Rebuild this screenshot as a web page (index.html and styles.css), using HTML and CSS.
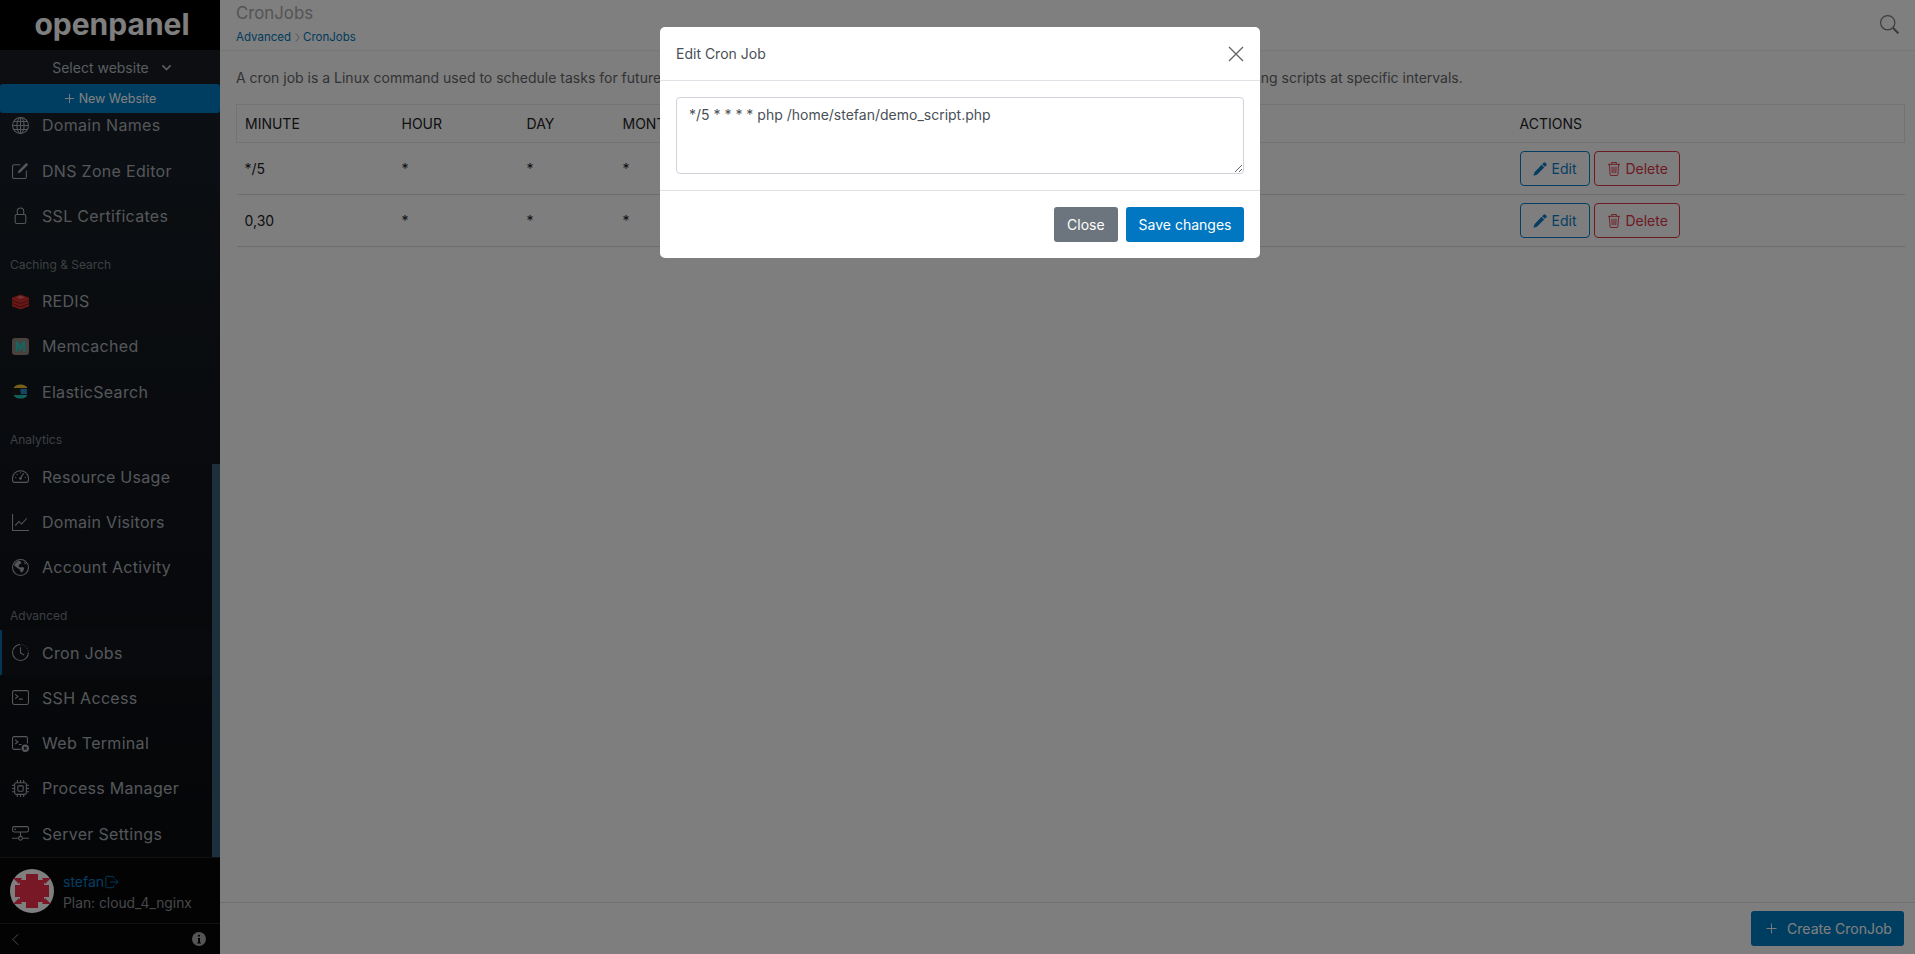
FILE: index.html
```html
<!DOCTYPE html>
<html lang="en">
<head>
<meta charset="utf-8">
<title>CronJobs</title>
<link rel="stylesheet" href="styles.css">
</head>
<body>
<div class="app">
  <aside class="sidebar">
    <div class="logo">openpanel</div>
    <div class="site-select">
      <span>Select website</span>
      <svg class="caret" viewBox="0 0 16 16"><path d="M2 5l6 6 6-6" fill="none" stroke="currentColor" stroke-width="2.500"/></svg>
    </div>
    <div class="new-site"><svg class="plus" viewBox="0 0 12 12"><path d="M6 1v10M1 6h10" stroke="currentColor"/></svg>New Website</div>
    <nav class="nav">
      <div class="nav-inner">
        <a class="item"><svg class="ico" viewBox="0 0 16 16"><g fill="none" stroke="currentColor"><circle cx="8" cy="8" r="7.500"/><ellipse cx="8" cy="8" rx="3.400" ry="7.500"/><path d="M8 .5v15M.5 8h15M1.600 4.300h12.800M1.600 11.700h12.800"/></g></svg>Domain Names</a>
        <a class="item"><svg class="ico" viewBox="0 0 16 16"><path d="M13.500.8l1.700 1.700-7.400 7.400-2.400.7.700-2.400z" fill="currentColor"/><path d="M8 2.500H2A1.500 1.500 0 0 0 .5 4v10A1.500 1.500 0 0 0 2 15.500h10a1.500 1.500 0 0 0 1.500-1.500V8" fill="none" stroke="currentColor"/></svg>DNS Zone Editor</a>
        <a class="item"><svg class="ico" viewBox="0 0 16 16"><path d="M5 7V4a3 3 0 0 1 6 0v3" fill="none" stroke="currentColor"/><rect x="3" y="7" width="10" height="8.500" rx="1.500" fill="none" stroke="currentColor"/></svg>SSL Certificates</a>
        <div class="label">Caching &amp; Search</div>
        <a class="item"><svg class="ico" viewBox="0 0 16 16"><path d="M8 1.500l8 3v8l-8 3-8-3v-8z" fill="#d0302c"/><path d="M0 7l8 3 8-3M0 10l8 3 8-3" fill="none" stroke="#7d1715" stroke-width=".9"/><path d="M8 2.500l4 1.500-4 1.500L4 4z" fill="#e9716c"/></svg>REDIS</a>
        <a class="item"><svg class="ico" viewBox="0 0 16 16"><rect width="16" height="16" rx="3" fill="#94857f"/><path d="M3.500 13V3h2.300L8 8l2.200-5h2.300v10h-2V7.500L8 12.500 5.500 7.500V13z" fill="#28c8bf"/></svg>Memcached</a>
        <a class="item"><svg class="ico" viewBox="0 0 16 16"><path d="M1.500 4.800a6.800 4.800 0 0 1 13 0z" fill="#f0c22e"/><rect x="1" y="5.500" width="7" height="2.200" fill="#1d1d1f"/><rect x="8" y="5.500" width="6" height="5" fill="#2a8fcb"/><rect x="1" y="8.300" width="7" height="2.200" fill="#1d1d1f"/><path d="M1.500 11.200h13a6.800 4.800 0 0 1-13 0z" fill="#22c1b3"/></svg>ElasticSearch</a>
        <div class="label">Analytics</div>
        <a class="item"><svg class="ico" viewBox="0 0 16 16"><g fill="none" stroke="currentColor"><path d="M2.800 13.500A2.300 2.300 0 0 1 .5 11.200V9.500a7.500 7 0 0 1 15 0v1.700a2.300 2.300 0 0 1-2.300 2.300z"/><path d="M8 9.500l3-4.500M3 9h1M12 9h1M8 4v1M4.500 5.800l.7.700"/></g><circle cx="8" cy="9.800" r="1.200" fill="currentColor"/></svg>Resource Usage</a>
        <a class="item"><svg class="ico" viewBox="0 0 16 16"><path d="M.5 0v15.500H16M3 11l3.500-4 2.500 2.500L14 4" fill="none" stroke="currentColor"/></svg>Domain Visitors</a>
        <a class="item"><svg class="ico" viewBox="0 0 16 16"><circle cx="8" cy="8" r="7.500" fill="none" stroke="currentColor"/><path d="M3 4l3-2.500 2 .5 1 2-2 1-1 2 2 1 2-.5 1.500 1-1 3-2 1.500-1-3-3-2-2.500-2zM11 2.500l2.500 2-1.500.5z" fill="currentColor"/></svg>Account Activity</a>
        <div class="label">Advanced</div>
        <a class="item active"><svg class="ico" viewBox="0 0 16 16"><g fill="none" stroke="currentColor"><path d="M8 .5a7.500 7.500 0 1 0 7.500 7.500"/><path d="M8 3v5.500l3.500 2"/><path d="M10 .8l.6.200M12.300 1.900l.5.400M14 3.700l.4.500M15 6l.2.600"/></g></svg>Cron Jobs</a>
        <a class="item"><svg class="ico" viewBox="0 0 16 16"><rect x=".5" y="1.500" width="15" height="13" rx="1.500" fill="none" stroke="currentColor"/><path d="M3 5l2.500 2L3 9M6.500 9.500h3.500" fill="none" stroke="currentColor"/></svg>SSH Access</a>
        <a class="item"><svg class="ico" viewBox="0 0 16 16"><path d="M8 13.500H2A1.500 1.500 0 0 1 .5 12V3A1.500 1.500 0 0 1 2 1.500h11A1.500 1.500 0 0 1 14.500 3v5" fill="none" stroke="currentColor"/><path d="M3 4.500l2.500 2L3 8.500M6.500 9H9" fill="none" stroke="currentColor"/><circle cx="12.500" cy="12.500" r="3.500" fill="currentColor"/><path d="M11.200 11.200l2.600 2.600m0-2.600l-2.600 2.600" stroke="#08090c"/></svg>Web Terminal</a>
        <a class="item"><svg class="ico" viewBox="0 0 16 16"><g fill="none" stroke="currentColor"><rect x="2.500" y="2.500" width="11" height="11" rx="1.500"/><rect x="5.500" y="5.500" width="5" height="5" rx=".8"/><path d="M5 0v2.500M8 0v2.500M11 0v2.500M5 13.500V16M8 13.500V16M11 13.500V16M0 5h2.500M0 8h2.500M0 11h2.500M13.500 5H16M13.500 8H16M13.500 11H16"/></g></svg>Process Manager</a>
        <a class="item"><svg class="ico" viewBox="0 0 16 16"><g fill="none" stroke="currentColor"><rect x=".5" y="1.500" width="15" height="5" rx="1.500"/><path d="M8 6.500v4M0 12.500h6M10 12.500h6"/><circle cx="8" cy="12.500" r="1.800"/></g><circle cx="3" cy="4" r=".8" fill="currentColor"/></svg>Server Settings</a>
      </div>
      <span class="scrollbar"></span>
    </nav>
    <div class="user">
      <svg class="avatar" viewBox="0 0 44 44"><circle cx="22" cy="22" r="22" fill="#fff"/><path d="M16 5h12v6h6v5h5v12h-5v5h-6v6H16v-6h-6v-5H5V16h5v-5h6z" fill="#f0304f"/><path d="M3 9l6 6 3-6zM41 9l-6 6-3-6zM3 35l6-6 3 6zM41 35l-6-6-3 6z" fill="#f0304f"/></svg>
      <div class="user-text">
        <div class="user-name">stefan<svg class="logout" viewBox="0 0 16 16"><path d="M10 4V2.500A1 1 0 0 0 9 1.500H2A1 1 0 0 0 1 2.500v11a1 1 0 0 0 1 1h7a1 1 0 0 0 1-1V12M6 8h9M12 5l3 3-3 3" fill="none" stroke="currentColor"/></svg></div>
        <div class="user-plan">Plan: cloud_4_nginx</div>
      </div>
    </div>
    <div class="side-foot">
      <svg class="collapse" viewBox="0 0 8 14"><path d="M7 1L1 7l6 6" fill="none" stroke="currentColor"/></svg>
      <svg class="info" viewBox="0 0 16 16"><circle cx="8" cy="8" r="8" fill="currentColor"/><path d="M6.800 6.800h2.300v5.200h1v1H6v-1h1V7.800h-.2zM8 3a1.200 1.200 0 1 1 0 2.500A1.200 1.200 0 0 1 8 3z" fill="#000"/></svg>
    </div>
  </aside>
  <main class="main">
    <header class="topbar">
      <div>
        <div class="page-title">CronJobs</div>
        <div class="crumbs"><a>Advanced</a><svg class="sep" viewBox="0 0 6 12"><path d="M1 1l4 5-4 5" fill="none" stroke="currentColor"/></svg><a>CronJobs</a></div>
      </div>
      <svg class="search" viewBox="0 0 16 16"><circle cx="6.500" cy="6.500" r="6" fill="none" stroke="currentColor"/><path d="M11 11l4.500 4.500" stroke="currentColor" stroke-width="1.800"/></svg>
    </header>
    <section class="content">
      <p class="desc">A cron job is a Linux command used to schedule tasks for future execution, commonly used for automating repetitive jobs, hourly system backups, or running scripts at specific intervals.</p>
      <table class="jobs">
        <colgroup><col class="c1"><col class="c2"><col class="c3"><col class="c4"><col class="c5"><col class="c6"><col class="c7"></colgroup>
        <thead><tr><th>MINUTE</th><th>HOUR</th><th>DAY</th><th>MONTH</th><th></th><th></th><th>ACTIONS</th></tr></thead>
        <tbody>
          <tr><td>*/5</td><td>*</td><td>*</td><td>*</td><td></td><td></td><td>
            <button class="btn edit"><svg class="bi" viewBox="0 0 16 16"><path d="M12.100.9a1.500 1.500 0 0 1 2.100 0l.9.900a1.500 1.500 0 0 1 0 2.100L13.500 5.500 10.500 2.500zM9.800 3.200l3 3-8.300 8.300-4 1.200 1.200-4z" fill="currentColor"/></svg>Edit</button>
            <button class="btn del"><svg class="bi" viewBox="1 1 14 15"><path d="M1.500 3.500h13M5.500 3.500V1.500h5v2M3 3.500l.8 11a1 1 0 0 0 1 1h6.400a1 1 0 0 0 1-1l.8-11M5.800 6l.3 7M8 6v7M10.200 6l-.3 7" fill="none" stroke="currentColor"/></svg>Delete</button>
          </td></tr>
          <tr><td>0,30</td><td>*</td><td>*</td><td>*</td><td></td><td></td><td>
            <button class="btn edit"><svg class="bi" viewBox="0 0 16 16"><path d="M12.100.9a1.500 1.500 0 0 1 2.100 0l.9.900a1.500 1.500 0 0 1 0 2.100L13.500 5.500 10.500 2.500zM9.800 3.200l3 3-8.300 8.300-4 1.200 1.200-4z" fill="currentColor"/></svg>Edit</button>
            <button class="btn del"><svg class="bi" viewBox="1 1 14 15"><path d="M1.500 3.500h13M5.500 3.500V1.500h5v2M3 3.500l.8 11a1 1 0 0 0 1 1h6.400a1 1 0 0 0 1-1l.8-11M5.800 6l.3 7M8 6v7M10.200 6l-.3 7" fill="none" stroke="currentColor"/></svg>Delete</button>
          </td></tr>
        </tbody>
      </table>
    </section>
    <footer class="bottombar">
      <button class="create"><svg class="create-plus" viewBox="0 0 12 12"><path d="M6 .5v11M.5 6h11" stroke="currentColor"/></svg>Create CronJob</button>
    </footer>
  </main>
</div>
<div class="backdrop">
  <div class="modal">
    <div class="modal-head">
      <span>Edit Cron Job</span>
      <svg class="close-x" viewBox="0 0 16 16"><path d="M1 1l14 14M15 1L1 15" stroke="currentColor" stroke-width="1.400"/></svg>
    </div>
    <div class="modal-body">
      <textarea class="cron-input">*/5 * * * * php /home/stefan/demo_script.php</textarea>
    </div>
    <div class="modal-foot">
      <button class="mbtn gray">Close</button>
      <button class="mbtn blue">Save changes</button>
    </div>
  </div>
</div>
</body>
</html>
```

FILE: styles.css
```css
* { box-sizing: border-box; }
html, body { margin: 0; height: 100%; overflow: hidden; }
body { font-family: Inter, "Liberation Sans", sans-serif; font-size: 14px; color: #666; background: #fcfdff; }
.app { display: flex; height: 954px; }

.sidebar { width: 220px; flex: none; display: flex; flex-direction: column; background: #12161c; color: #b4babf; }
.logo { height: 50px; padding-left: 4px; background: #000; color: #fff; font-size: 30px; font-weight: 700; line-height: 48px; text-align: center; }
.site-select { height: 34px; display: flex; align-items: center; justify-content: center; gap: 12px; font-size: 14px; color: #b4babf; background: #181c22; padding-left: 4px; }
.caret { width: 11px; height: 11px; }
.new-site { height: 29px; display: flex; align-items: center; justify-content: center; gap: 4px; color: #fff; font-size: 12.500px; background: #007cc2; border-radius: 3px; position: relative; z-index: 1; }
.plus { width: 11px; height: 11px; }
.nav { flex: 1; min-height: 0; overflow: hidden; position: relative; background: linear-gradient(#181e26, #0a0c10); }
.nav-inner { margin-top: -10.200px; }
.item { display: flex; align-items: center; height: 45.250px; padding-left: 12px; font-size: 16px; letter-spacing: .3px; color: #a9afb5; }
.item.active { border-left: 2px solid #0a6ea8; padding-left: 10px; background: #10151b; }
.ico { width: 17px; height: 17px; margin-right: 13px; flex: none; overflow: visible; }
.label { height: 40px; padding: 18px 0 0 10px; font-size: 12px; line-height: 15px; color: #7a8087; }
.scrollbar { position: absolute; right: 0; top: 351px; width: 8px; height: 396px; background: #3a5f78; }
.user { height: 67px; flex: none; display: flex; align-items: center; gap: 9px; padding-left: 10px; background: #060708; border-top: 1px solid #222; border-bottom: 1px solid #222; }
.avatar { width: 44px; height: 44px; }
.user-name { color: #0a7cc4; font-size: 14px; line-height: 20px; display: flex; align-items: center; margin-top: 5px; }
.logout { width: 14px; height: 14px; margin-left: 1px; }
.user-plan { color: #8c9197; font-size: 13.800px; line-height: 22px; }
.side-foot { height: 30px; flex: none; display: flex; align-items: center; justify-content: space-between; padding: 0 14px 0 12px; background: #060708; color: #aaa; }
.collapse { width: 7px; height: 13px; }
.info { width: 14px; height: 14px; }

.main { flex: 1; min-width: 0; display: flex; flex-direction: column; }
.topbar { height: 51px; flex: none; display: flex; justify-content: space-between; align-items: flex-start; padding: 0 16px; background: #fff; border-bottom: 1px solid #eceeef; }
.page-title { font-size: 16.800px; line-height: 26px; color: #a8a8a8; }
.crumbs { font-size: 11.500px; line-height: 22px; color: #0077b8; display: flex; align-items: center; }
.sep { width: 5px; height: 11px; margin: 0 3px 0 4px; color: #999; }
.search { width: 19px; height: 19px; margin-top: 15px; color: #777; }
.content { flex: 1; padding: 16px 11px 0 16px; }
.desc { margin: 0 0 16px; line-height: 21px; color: #666; }
.jobs { width: 100%; border-collapse: collapse; table-layout: fixed; color: #222; }
.c1 { width: 157px; } .c2 { width: 125px; } .c3 { width: 96px; } .c4 { width: 130px; } .c5 { width: 130px; } .c6 { width: 637px; } .c7 { width: 393px; }
.jobs th { height: 38px; padding: 0 8px; font-weight: 400; text-align: left; border: 0; border-top: 1px solid #e4e6e8; border-bottom: 1px solid #e4e6e8; }
.jobs th:first-child { border-left: 1px solid #e4e6e8; }
.jobs th:last-child { border-right: 1px solid #e4e6e8; }
.jobs td { height: 52px; padding: 8px; border-bottom: 1px solid #d8dadc; }
.btn { height: 35px; padding: 0 13px 0 12px; font: inherit; background: transparent; border: 1px solid; border-radius: 4px; display: inline-flex; align-items: center; vertical-align: middle; }
.btn .bi { width: 14px; height: 14px; margin-right: 5px; }
.edit { color: #0a7cc4; border-color: #0a7cc4; }
.del { color: #dc3545; border-color: #dc3545; padding-right: 11px; }
.del .bi { margin-right: 4px; }
.bottombar { height: 52px; flex: none; display: flex; justify-content: flex-end; align-items: center; padding-right: 11px; background: #fcfdff; border-top: 1px solid #dde3e8; }
.create { width: 153px; height: 35px; padding: 0 5px 0 8px; background: #007cc2; color: #fff; border: 0; border-radius: 3px; font: inherit; display: flex; align-items: center; justify-content: center; }
.create-plus { width: 11px; height: 11px; margin-right: 10px; }

.backdrop { position: fixed; inset: 0; z-index: 10; background: rgba(0,0,0,.5); }
.modal { width: 600px; height: 231px; margin: 27px 0 0 660px; background: #fff; border-radius: 5px; display: flex; flex-direction: column; color: #495057; }
.modal-head { height: 54px; flex: none; display: flex; align-items: center; justify-content: space-between; padding: 0 16px; border-bottom: 1px solid #dee2e6; }
.close-x { width: 16px; height: 16px; color: #666; }
.modal-body { height: 110px; flex: none; padding: 16px; border-bottom: 1px solid #dee2e6; }
.cron-input { display: block; width: 100%; height: 77px; padding: 6px 12px; font: inherit; line-height: 21px; color: #495057; border: 1px solid #ced4da; border-radius: 4px; outline: none; }
.modal-foot { flex: 1; display: flex; justify-content: flex-end; align-items: flex-start; gap: 8px; padding: 16px; }
.mbtn { height: 35px; border: 0; border-radius: 3px; color: #fff; font: inherit; }
.gray { background: #6c757d; padding: 0 13.500px; }
.blue { background: #0077c0; padding: 0 12.500px; }
```
